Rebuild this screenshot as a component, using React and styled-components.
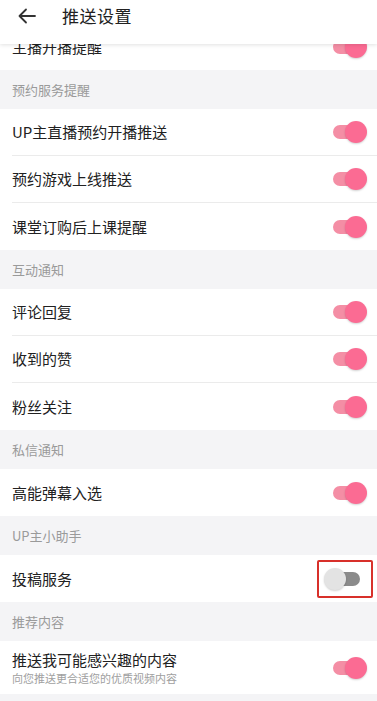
import React from "react";
import styled, { createGlobalStyle, css } from "styled-components";

const Global = createGlobalStyle`
  html, body { margin: 0; padding: 0; background: #f4f4f6; }
  body { font-family: "Noto Sans CJK SC", "Noto Sans", sans-serif; -webkit-font-smoothing: antialiased; }
  * { box-sizing: border-box; }
`;

const Screen = styled.div`
  width: 377px;
  height: 701px;
  display: flex;
  flex-direction: column;
  background: #f4f4f6;
  overflow: hidden;
`;

const Header = styled.header`
  position: relative;
  z-index: 2;
  height: 44px;
  flex: none;
  display: flex;
  align-items: flex-start;
  padding-top: 4px;
  background: #fff;
  box-shadow: 0 1px 4px rgba(0, 0, 0, 0.12);
`;

const BackButton = styled.button`
  width: 56px;
  height: 24px;
  border: none;
  background: none;
  padding: 0 0 0 17px;
  display: flex;
  align-items: center;
  color: #333;
`;

const Title = styled.h1`
  margin: 0 0 0 6px;
  font-size: 17px;
  line-height: 24px;
  font-weight: 400;
  color: #212121;
  letter-spacing: 0.5px;
`;

const Scroll = styled.div`
  flex: 1;
  overflow: hidden;
`;

const List = styled.div`
  margin-top: -21px;
  display: flex;
  flex-direction: column;
`;

const SectionTitle = styled.div`
  height: 39px;
  display: flex;
  align-items: center;
  padding-left: 12px;
  font-size: 13px;
  color: #9a9a9a;
  background: #f4f4f6;
`;

const Group = styled.div`
  background: #fff;
`;

const Row = styled.div`
  height: ${(p) => (p.$tall ? 53 : 47)}px;
  margin-left: 12px;
  padding-right: 10px;
  display: flex;
  align-items: center;
  justify-content: space-between;
  ${(p) =>
    !p.$last &&
    css`
      border-bottom: 1px solid #ebebeb;
    `}
`;

const Texts = styled.div`
  display: flex;
  flex-direction: column;
`;

const Label = styled.span`
  font-size: 15px;
  color: #212121;
  line-height: 20px;
`;

const Sub = styled.span`
  font-size: 11px;
  color: #a0a0a0;
  line-height: 16px;
`;

const Highlight = styled.div`
  border: 2px solid #d8302a;
  border-radius: 2px;
  padding: 6px 13px 6px 5px;
  margin-right: -6px;
  display: flex;
`;

const Track = styled.div`
  position: relative;
  width: 34px;
  height: 22px;
  display: flex;
  align-items: center;
  &::before {
    content: "";
    position: absolute;
    left: ${(p) => (p.$on ? 0 : 6)}px;
    right: ${(p) => (p.$on ? 4 : -2)}px;
    height: 14px;
    border-radius: 7px;
    background: ${(p) => (p.$on ? "#f48ea5" : "#8b8b8b")};
  }
`;

const Knob = styled.div`
  position: absolute;
  top: 0;
  ${(p) => (p.$on ? "right: 0;" : "left: 0;")}
  width: 22px;
  height: 22px;
  border-radius: 50%;
  background: ${(p) => (p.$on ? "#fb6b93" : "#e3e3e3")};
  box-shadow: 0 1px 2px rgba(0, 0, 0, 0.18);
`;

const Toggle = ({ on = true }) => (
  <Track $on={on}>
    <Knob $on={on} />
  </Track>
);

const sections = [
  { title: null, items: [{ label: "主播开播提醒" }] },
  {
    title: "预约服务提醒",
    items: [
      { label: "UP主直播预约开播推送" },
      { label: "预约游戏上线推送" },
      { label: "课堂订购后上课提醒" },
    ],
  },
  {
    title: "互动通知",
    items: [{ label: "评论回复" }, { label: "收到的赞" }, { label: "粉丝关注" }],
  },
  { title: "私信通知", items: [{ label: "高能弹幕入选" }] },
  { title: "UP主小助手", items: [{ label: "投稿服务", on: false, marked: true }] },
  {
    title: "推荐内容",
    items: [{ label: "推送我可能感兴趣的内容", sub: "向您推送更合适您的优质视频内容" }],
  },
];

export default function App() {
  return (
    <>
      <Global />
      <Screen>
        <Header>
          <BackButton aria-label="返回">
            <svg width="20" height="20" viewBox="0 0 20 20" fill="none" stroke="#333" strokeWidth="1.8" strokeLinecap="round" strokeLinejoin="round">
              <path d="M18 10H2.5M9 3.5L2.5 10L9 16.5" />
            </svg>
          </BackButton>
          <Title>推送设置</Title>
        </Header>
        <Scroll>
          <List>
            {sections.map((s, si) => (
              <React.Fragment key={si}>
                {s.title && <SectionTitle>{s.title}</SectionTitle>}
                <Group>
                  {s.items.map((it, i) => (
                    <Row key={i} $last={i === s.items.length - 1} $tall={!!it.sub}>
                      <Texts>
                        <Label>{it.label}</Label>
                        {it.sub && <Sub>{it.sub}</Sub>}
                      </Texts>
                      {it.marked ? (
                        <Highlight>
                          <Toggle on={it.on !== false} />
                        </Highlight>
                      ) : (
                        <Toggle on={it.on !== false} />
                      )}
                    </Row>
                  ))}
                </Group>
              </React.Fragment>
            ))}
          </List>
        </Scroll>
      </Screen>
    </>
  );
}
